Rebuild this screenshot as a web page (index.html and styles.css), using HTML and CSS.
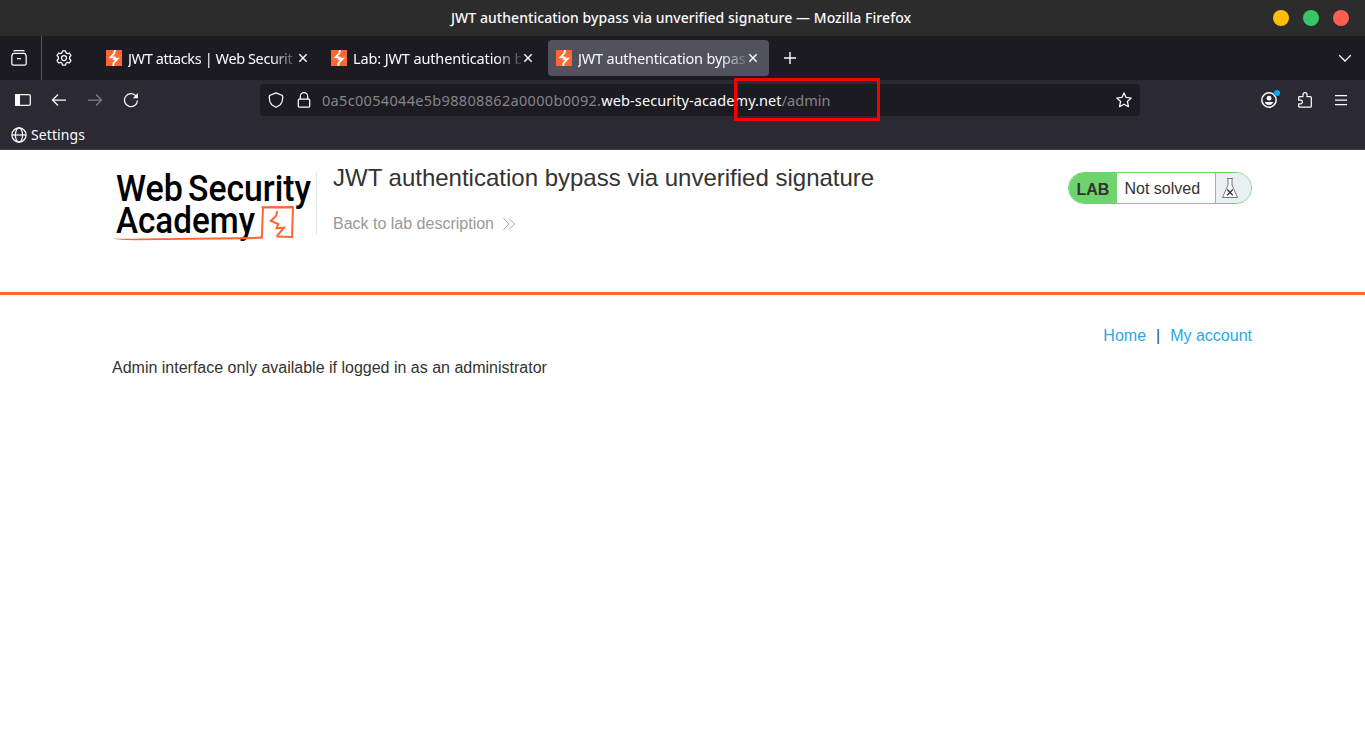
FILE: index.html
```html
<!DOCTYPE html>
<html lang="en">
<head>
<meta charset="utf-8">
<title>JWT authentication bypass via unverified signature</title>
<link rel="stylesheet" href="styles.css">
</head>
<body>
<svg class="defs" width="0" height="0" aria-hidden="true">
  <symbol id="bolt" viewBox="0 0 16 16"><rect width="16" height="16" fill="#ff6633"/><path d="M9 0L8.3 3.4L4.6 7.2L8.6 7.6L8 9.2L11.6 8.8L7.6 13.2L7.2 16" fill="none" stroke="#fff" stroke-width="1.9"/></symbol>
  <symbol id="x" viewBox="0 0 10 10"><path d="M1.3 1.3l7.4 7.4M8.7 1.3L1.3 8.7" stroke="#fbfbfe" stroke-width="1.4"/></symbol>
</svg>
<header class="titlebar">
  <span class="window-title">JWT authentication bypass via unverified signature — Mozilla Firefox</span>
  <div class="window-buttons"><i class="dot yellow"></i><i class="dot green"></i><i class="dot red"></i></div>
</header>
<div class="tabstrip">
  <div class="view-button"><svg class="icon" viewBox="0 0 16 16"><path d="M2.5 1.2Q3 .7 4 .7H12Q13 .7 13.5 1.2M1.4 4.7Q1.4 3.3 2.8 3.3H13.2Q14.6 3.3 14.6 4.7L15.2 6V13.4Q15.2 15.1 13.5 15.1H2.5Q.8 15.1.8 13.4V6ZM6 8.5H10"/></svg></div>
  <div class="pinned"><svg class="icon" viewBox="0 0 16 16"><path d="M6.5.8H9.5L10 2.7L11.5 3.6L13.4 3L15 5.6L13.6 7V9L15 10.4L13.4 13L11.5 12.4L10 13.3L9.5 15.2H6.5L6 13.3L4.5 12.4L2.6 13L1 10.4L2.4 9V7L1 5.6L2.6 3L4.5 3.6L6 2.7Z" stroke-linejoin="round"/><circle cx="8" cy="8" r="2.5"/></svg></div>
  <div class="tab"><svg class="fav"><use href="#bolt"/></svg><span class="tab-label t1">JWT attacks | Web Securit</span><svg class="close"><use href="#x"/></svg></div>
  <div class="tab"><svg class="fav"><use href="#bolt"/></svg><span class="tab-label t2">Lab: JWT authentication b</span><svg class="close"><use href="#x"/></svg></div>
  <div class="tab active"><svg class="fav"><use href="#bolt"/></svg><span class="tab-label t3">JWT authentication bypas</span><svg class="close"><use href="#x"/></svg></div>
  <svg class="icon new-tab" viewBox="0 0 16 16"><path d="M8 2V14M2 8H14" stroke-width="1.4"/></svg>
  <svg class="icon all-tabs" viewBox="0 0 16 16"><path d="M2.2 5.2L8 11L13.8 5.2"/></svg>
</div>
<nav class="navbar">
  <svg class="icon" viewBox="0 0 16 16"><rect x=".7" y="2.7" width="14.6" height="10.6" rx="1.4"/><path d="M.7 2.7H4.4V13.3H.7Z" fill="#fbfbfe"/></svg>
  <svg class="icon back" viewBox="0 0 16 16"><path d="M15 8H1.8M7 2.5L1.5 8L7 13.5"/></svg>
  <svg class="icon forward" viewBox="0 0 16 16"><path d="M1 8H14.2M9 2.5L14.5 8L9 13.5"/></svg>
  <svg class="icon reload" viewBox="0 0 16 16"><path d="M13 4A6.5 6.5 0 1 0 14.5 8.5"/><path d="M15 1V6.2H9.8Z" fill="#fbfbfe" stroke="none"/></svg>
  <div class="urlbar">
    <svg class="icon" viewBox="0 0 16 16"><path d="M8 .8L14.5 3.5Q15.5 9.5 12 13L8 15.3L4 13Q.5 9.5 1.5 3.5Z" stroke-linejoin="round"/></svg>
    <svg class="icon lock" viewBox="0 0 16 16"><rect x="2.3" y="7.2" width="11.4" height="7.9" rx="1"/><path d="M4.3 7V4.4A3.7 3.7 0 0 1 11.7 4.4V7"/></svg>
    <span class="url"><span class="url-host">0a5c0054044e5b98808862a0000b0092.</span><span class="url-domain">web-security-academy.net</span><span class="url-path">/admin</span></span>
    <svg class="icon star" viewBox="0 0 16 16"><path d="M8 .9L10.1 5.4L15.2 6L11.4 9.5L12.5 14.7L8 12.2L3.5 14.7L4.6 9.5L.8 6L5.9 5.4Z" stroke-linejoin="round"/></svg>
    <div class="highlight"></div>
  </div>
  <div class="account"><svg class="icon" viewBox="0 0 16 16"><circle cx="8" cy="8" r="7.2" stroke-width="1.5"/><circle cx="8" cy="6.2" r="2.4" fill="#fbfbfe" stroke="none"/><path d="M3.8 10H12.2Q11.5 13 8 13T3.8 10Z" fill="#fbfbfe" stroke="none"/></svg><i class="badge"></i></div>
  <svg class="icon extensions" viewBox="0 0 16 16"><path d="M1.7 8.2V5.3Q1.7 4.5 2.5 4.5H6V2.7A2 2 0 0 1 10 2.7V4.5H13.3Q14.3 4.5 14.3 5.5V14.2Q14.3 15.2 13.3 15.2H2.5Q1.7 15.2 1.7 14.3V11.8H3.6A1.8 1.8 0 0 0 3.6 8.2Z" stroke-linejoin="round"/></svg>
  <svg class="icon menu" viewBox="0 0 16 16"><path d="M2 3.5H14M2 8H14M2 12.5H14"/></svg>
</nav>
<div class="bookmarks">
  <svg class="icon globe" viewBox="0 0 16 16"><circle cx="8" cy="8" r="7.1"/><ellipse cx="8" cy="8" rx="3.6" ry="7.1"/><path d="M.9 8H15.1"/></svg>
  <span>Settings</span>
</div>
<main>
  <section class="lab-header">
    <svg class="logo" viewBox="0 0 202 80" role="img" aria-label="Web Security Academy">
      <g class="logo-text">
        <text x="4" y="36.7" textLength="67" lengthAdjust="spacingAndGlyphs">Web</text>
        <text x="76" y="36.7" textLength="123" lengthAdjust="spacingAndGlyphs">Security</text>
        <text x="4" y="69.2" textLength="139" lengthAdjust="spacingAndGlyphs">Academy</text>
      </g>
      <path class="underline" d="M1 74.5Q12 75.2 30 74.5L142 73L150 72.2L151 74.5L137 75.2L22 76.3Q7 76 1 74.5Z"/>
      <path class="logo-box" d="M149.8 74L151 43.5H181L180 73L164.5 72.5M149.5 43.3L181 43"/>
      <path class="logo-box" d="M165.3 47L164 52L158.8 57L166.3 60L164.6 64.3L172 63.6L164.8 72.2"/>
    </svg>
    <div class="title-block">
      <h2>JWT authentication bypass via unverified signature</h2>
      <a class="back-link">Back to lab description <svg class="chevrons" viewBox="0 0 12 12"><path d="M.5 .5L6 6L.5 11.5M6 .5L11.5 6L6 11.5"/></svg></a>
    </div>
    <div class="status">
      <b class="status-lab">LAB</b><span class="status-text">Not solved</span>
      <span class="status-flask"><svg viewBox="0 0 18 22"><path d="M6 1.5H12M7 1.5V8L1.5 20.5H16.5L11 8V1.5" fill="#fff" stroke="#777"/><path d="M6.2 12.5L11.8 18.2M11.8 12.5L6.2 18.2" stroke="#333" stroke-width="1.3"/></svg></span>
    </div>
  </section>
  <section class="content">
    <div class="links"><a>Home</a><span>|</span><a>My account</a></div>
    <p>Admin interface only available if logged in as an administrator</p>
  </section>
</main>
</body>
</html>
```
FILE: styles.css
```css
* { box-sizing: border-box; }
body { margin: 0; background: #fff; color: #333332; font: 16px/20px "Liberation Sans", Arial, sans-serif; width: 1365px; height: 740px; overflow: hidden; }
svg { display: block; flex: none; }
.defs { position: absolute; }
.icon { width: 16px; height: 16px; fill: none; stroke: #fbfbfe; stroke-width: 1.25; }
.titlebar, .tabstrip, .navbar, .bookmarks { display: flex; align-items: center; font-family: "Noto Sans", sans-serif; color: #fbfbfe; white-space: nowrap; }

.titlebar { height: 36px; background: #2c2c2c; padding: 0 16px 0 451px; justify-content: space-between; }
.window-title { font-size: 14px; font-weight: 500; letter-spacing: .05px; }
.window-buttons { display: flex; gap: 14px; }
.dot { width: 16px; height: 16px; border-radius: 50%; }
.yellow { background: #ffbd0a; }
.green { background: #38c768; }
.red { background: #ff5f52; }

.tabstrip { height: 44px; background: #1c1b22; padding-right: 12px; }
.view-button { width: 42px; height: 44px; padding: 14px 0 0 11px; border-right: 1px solid #55545c; }
.pinned { width: 56px; padding-left: 14px; }
.tab { width: 221px; height: 36px; margin-right: 4px; padding: 0 11px 0 8px; display: flex; align-items: center; border-radius: 4px; }
.active { background: #52525e; }
.fav { width: 16px; height: 16px; margin-right: 6px; }
.tab-label { width: 168px; overflow: hidden; font-size: 14.5px; -webkit-mask-image: linear-gradient(90deg, #000 143px, transparent 172px); mask-image: linear-gradient(90deg, #000 143px, transparent 172px); }
.t1 { letter-spacing: -.4px; }
.t2 { letter-spacing: -.13px; }
.t3 { letter-spacing: -.2px; }
.close { width: 10px; height: 10px; margin-left: 2px; }
.new-tab { margin-left: 9px; }
.all-tabs { margin-left: auto; }

.navbar { height: 40px; background: #2b2a33; padding: 0 16px 0 15px; }
.back, .forward, .reload { margin-left: 20px; }
.forward { opacity: .4; }
.urlbar { position: relative; display: flex; align-items: center; width: 880px; height: 32px; margin-left: 121px; padding: 0 8px; border-radius: 4px; background: #1c1b22; }
.lock { margin-left: 12px; }
.url { display: flex; margin-left: 10px; font-size: 14.5px; color: #85848b; }
.url-host { letter-spacing: .32px; }
.url-domain { color: #fbfbfe; letter-spacing: .09px; }
.star { margin-left: auto; }
.highlight { position: absolute; left: 474px; top: -6px; width: 146px; height: 43px; border: 3px solid #f80000; }
.account { position: relative; margin-left: 121px; }
.badge { position: absolute; right: -3px; top: -2px; width: 6px; height: 6px; border-radius: 50%; background: #00a8f5; }
.extensions { margin-left: 20px; }
.menu { margin-left: 20px; }

.bookmarks { height: 30px; background: #2b2a33; padding-left: 11px; gap: 4px; font-size: 14px; letter-spacing: .1px; border-bottom: 1px solid #3f3e48; }

.lab-header { height: 145px; padding: 14px 113px 0 112px; display: flex; align-items: flex-start; border-bottom: 3px solid #ff6633; }
.logo { width: 202px; height: 80px; overflow: visible; }
.logo-text { font: 500 37.5px Roboto, sans-serif; fill: #000; }
.underline { fill: #ff6633; }
.logo-box { fill: none; stroke: #ff6633; stroke-width: 2; }
.title-block { height: 63px; margin: 8px 0 0 2px; padding-left: 16px; border-left: 1px solid #e4e4e4; }
h2 { margin: -8px 0 0; font-size: 24px; line-height: 28px; font-weight: 400; }
.back-link { display: flex; align-items: center; gap: 9px; margin-top: 22px; color: #999; }
.chevrons { width: 12px; height: 12px; fill: none; stroke: #999; stroke-width: .9; }
.status { display: flex; width: 184px; height: 32px; margin: 8px 0 0 auto; border: 1px solid #70d46e; border-radius: 16px; overflow: hidden; line-height: 31px; }
.status-lab { width: 48px; padding-left: 7.5px; background: #70d46e; line-height: 33px; }
.status-text { width: 98px; padding-left: 7.5px; }
.status-flask { flex: 1; padding: 4px 0 0 5px; border-left: 1px solid #70d46e; background: #eaeff2; }
.status-flask svg { width: 18px; height: 22px; fill: none; }
.content { padding: 31px 113px 0 112px; }
.links { display: flex; justify-content: flex-end; gap: 10px; color: #29aae2; }
.links span { color: #2f4d78; }
.content p { margin: 12px 0 0; }
```
